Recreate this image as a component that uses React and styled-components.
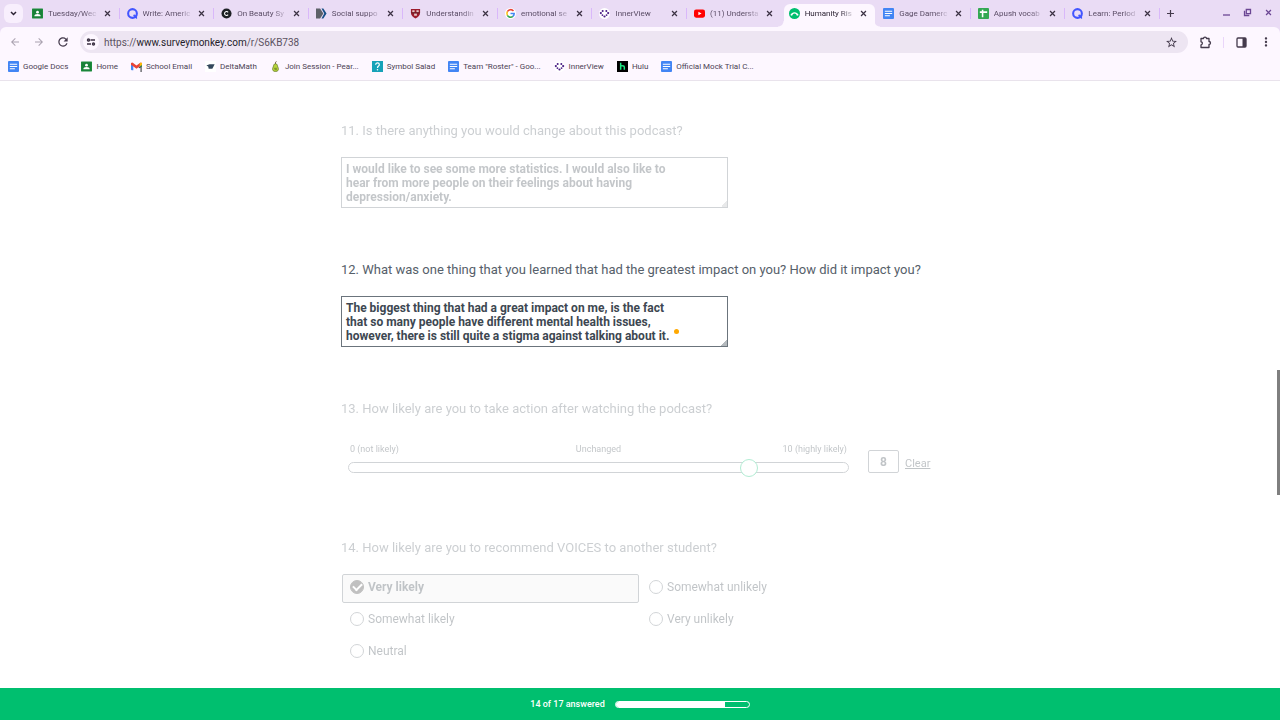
import React, { useState } from 'react';
import styled, { createGlobalStyle } from 'styled-components';
import { MdArrowBack, MdArrowForward, MdRefresh, MdStarBorder, MdMoreVert } from 'react-icons/md';

const GlobalStyle = createGlobalStyle`
  * {
    box-sizing: border-box;
  }

  body {
    margin: 0;
    background-color: #fff;
    font-family: Roboto, "Liberation Sans", sans-serif;
  }

  button, input, textarea {
    font-family: inherit;
  }
`;

/* ---------- favicons ---------- */

const ClassroomIcon = () => (
  <Favicon viewBox="0 0 24 24">
    <rect y="1" width="24" height="22" rx="1" fill="#1e8e3e" />
    <rect x="2" y="3" width="20" height="18" fill="#188038" />
    <circle cx="12" cy="9" r="3" fill="#fff" />
    <path d="M5 18c0-3.500 3-5 7-5s7 1.500 7 5z" fill="#fff" />
  </Favicon>
);

const DocsIcon = () => (
  <Favicon viewBox="0 0 24 24">
    <rect width="24" height="24" rx="2" fill="#4285f4" />
    <path d="M4 7h16M4 12h16M4 17h11" stroke="#fff" strokeWidth="2.4" />
  </Favicon>
);

const SheetsIcon = () => (
  <Favicon viewBox="0 0 24 24">
    <rect width="24" height="24" rx="2" fill="#34a853" />
    <path d="M10 4v16M4 9h16" stroke="#fff" strokeWidth="3.4" />
  </Favicon>
);

const QuillIcon = () => (
  <Favicon viewBox="0 0 24 24">
    <circle cx="12" cy="12" r="9.5" fill="none" stroke="#4255ff" strokeWidth="4.5" />
    <path d="M13 15l4 6 5 3v-5l-5-5z" fill="#4255ff" />
  </Favicon>
);

const CIcon = () => (
  <Favicon viewBox="0 0 24 24">
    <circle cx="12" cy="12" r="11" fill="#1d2025" />
    <path d="M15.5 9.500a4.300 4.300 0 1 0 0 5" fill="none" stroke="#fff" strokeWidth="2.2" />
  </Favicon>
);

const TagIcon = () => (
  <Favicon viewBox="0 0 24 24">
    <path d="M0 1h9l7 11-7 11H0z" fill="#5d6168" />
    <path d="M12 1h4l7 11-7 11h-4l6-11z" fill="#174f86" />
  </Favicon>
);

const ShieldIcon = () => (
  <Favicon viewBox="0 0 24 24">
    <path d="M2 2h20v8c0 7-5 11-10 13C7 21 2 17 2 10z" fill="#9c1c2c" />
    <path d="M5 5h5v4H5zM14 5h5v4h-5zM9 12h6v5H9z" fill="#e3c9c9" />
    <path d="M3 10.500h18" stroke="#42191c" strokeWidth="1.5" />
  </Favicon>
);

const GoogleIcon = () => (
  <Favicon viewBox="0 0 24 24">
    <circle cx="12" cy="12" r="12" fill="#fff" />
    <path d="M18.500 6.500A8 8 0 0 0 5.200 8" fill="none" stroke="#ea4335" strokeWidth="3.4" />
    <path d="M5.200 8a8 8 0 0 0 0 8" fill="none" stroke="#fbbc05" strokeWidth="3.4" />
    <path d="M5.200 16a8 8 0 0 0 12 2.200" fill="none" stroke="#34a853" strokeWidth="3.4" />
    <path d="M12 12h8a8 8 0 0 1-2.800 6.200" fill="none" stroke="#4285f4" strokeWidth="3.4" />
  </Favicon>
);

const InnerViewIcon = () => (
  <Favicon viewBox="0 0 24 24">
    <circle cx="12" cy="12" r="12" fill="#fff" />
    <g fill="#4a1d85">
      <circle cx="8" cy="6.500" r="2.2" />
      <circle cx="16" cy="6.500" r="2.2" />
      <circle cx="4" cy="11" r="2.4" />
      <circle cx="20" cy="11" r="2.4" />
      <circle cx="7.500" cy="15.500" r="2" />
      <circle cx="16.500" cy="15.500" r="2" />
      <circle cx="12" cy="18.500" r="2.4" />
    </g>
  </Favicon>
);

const YoutubeIcon = () => (
  <Favicon viewBox="0 0 24 24">
    <rect y="3" width="24" height="18" rx="4.5" fill="#f00" />
    <path d="M9.500 8v8l7-4z" fill="#fff" />
  </Favicon>
);

const SurveyIcon = () => (
  <Favicon viewBox="0 0 24 24">
    <circle cx="12" cy="12" r="12" fill="#00bf6f" />
    <path d="M5.500 15.500a6.700 6.700 0 0 1 13 0" fill="none" stroke="#fff" strokeWidth="2.8" />
    <circle cx="5.500" cy="14.500" r="2" fill="#fff" />
    <circle cx="18.500" cy="14.500" r="2" fill="#fff" />
  </Favicon>
);

const GmailIcon = () => (
  <Favicon viewBox="0 0 24 24">
    <path d="M0 5h5v15H2a2 2 0 0 1-2-2z" fill="#4285f4" />
    <path d="M19 5h5v8h-5z" fill="#34a853" />
    <path d="M0 4.500l3-1.500 9 7 9-7 3 1.500V8l-12 9L0 8z" fill="#ea4335" />
    <path d="M19 5l3-2 2 2v3l-5 4z" fill="#fbbc05" />
    <path d="M17 15l3-2h2v11" fill="none" stroke="#3c4043" strokeWidth="2.4" />
  </Favicon>
);

const DeltaIcon = () => (
  <Favicon viewBox="0 0 24 24">
    <rect width="24" height="24" fill="#fff" />
    <path d="M3 10l7-3h11l-3 6-2 4H8l-1-5z" fill="#33475b" />
  </Favicon>
);

const PearIcon = () => (
  <Favicon viewBox="0 0 24 24">
    <path d="M12 6c4 0 4 4 5 7 3 5 1 10-5 10S4 18 7 13c1-3 1-7 5-7z" fill="#b6d53c" stroke="#5c7020" strokeWidth="1.5" />
    <path d="M12 6c0-3 0-4 2-5" stroke="#5c4a20" strokeWidth="2" fill="none" />
    <path d="M9 16h6M10 19h5" stroke="#596b22" strokeWidth="1.5" />
  </Favicon>
);

const SymbolIcon = () => (
  <Favicon viewBox="0 0 24 24">
    <rect width="24" height="24" fill="#17a2b8" />
    <path d="M8 8c0-5 8-5 8 0 0 3-4 3-4 7" fill="none" stroke="#fff" strokeWidth="2.6" />
    <circle cx="12" cy="19" r="1.7" fill="#fff" />
  </Favicon>
);

const HuluIcon = () => (
  <Favicon viewBox="0 0 24 24">
    <rect width="24" height="24" fill="#000" />
    <path d="M8 4v15M8 12c0-2 8-3 8 1v6" fill="none" stroke="#1ce783" strokeWidth="3.2" />
  </Favicon>
);

/* ---------- interface icons ---------- */

const CrossIcon = () => (
  <svg width="7" height="7" viewBox="0 0 10 10" fill="none" stroke="currentColor" strokeWidth="1.8">
    <path d="M1.500 1.500l7 7M8.500 1.500l-7 7" />
  </svg>
);

const ChevronIcon = () => (
  <svg width="7" height="5" viewBox="0 0 7 5" fill="none" stroke="currentColor" strokeWidth="1.5">
    <path d="M1 1l2.500 2.500L6 1" />
  </svg>
);

const PlusIcon = () => (
  <svg width="9" height="9" viewBox="0 0 9 9" fill="none" stroke="currentColor" strokeWidth="1.2">
    <path d="M4.500 1v7M1 4.500h7" />
  </svg>
);

const MinimizeIcon = () => (
  <svg width="9" height="9" viewBox="0 0 9 9">
    <path d="M1 7h7" stroke="currentColor" strokeWidth="1.3" />
  </svg>
);

const RestoreIcon = () => (
  <svg width="9" height="9" viewBox="0 0 9 9" fill="none" stroke="currentColor" strokeWidth="1.3">
    <path d="M3.300 1.500h4.200v4.200H3.300zM1.500 2.800v4.700h4.800" />
  </svg>
);

const TuneIcon = () => (
  <svg width="10" height="8" viewBox="0 0 10 8" fill="none" stroke="currentColor" strokeWidth="1.4">
    <path d="M4.500 2H9M1 6h4" />
    <circle cx="2.500" cy="2" r="1" />
    <circle cx="7.500" cy="6" r="1" />
  </svg>
);

const PuzzleIcon = () => (
  <svg width="13" height="13" viewBox="0 0 13 13" fill="none" stroke="currentColor" strokeWidth="1.3">
    <path d="M2 2.500h2.500c0-1.800 3-1.800 3 0H10v3c2 0 2 3 0 3V11.500H2V8.800c1.800 0 1.800-3 0-3z" strokeLinejoin="round" />
  </svg>
);

const SidePanelIcon = () => (
  <svg width="11" height="11" viewBox="0 0 11 11">
    <rect x="1" y="1" width="9" height="9" rx="1" fill="none" stroke="currentColor" strokeWidth="1.3" />
    <path d="M6.500 1H10v9H6.500z" fill="currentColor" />
  </svg>
);

const tabs = [
  { title: 'Tuesday/Wec', icon: ClassroomIcon },
  { title: 'Write: Americ', icon: QuillIcon },
  { title: 'On Beauty Sy', icon: CIcon },
  { title: 'Social suppo', icon: TagIcon },
  { title: 'Understandin', icon: ShieldIcon },
  { title: 'emotional se', icon: GoogleIcon },
  { title: 'InnerView', icon: InnerViewIcon },
  { title: '(11) Understa', icon: YoutubeIcon },
  { title: 'Humanity Ris', icon: SurveyIcon, active: true },
  { title: 'Gage Damerc', icon: DocsIcon },
  { title: 'Apush vocab', icon: SheetsIcon },
  { title: 'Learn: Period', icon: QuillIcon },
];

const bookmarks = [
  { title: 'Google Docs', icon: DocsIcon },
  { title: 'Home', icon: ClassroomIcon },
  { title: 'School Email', icon: GmailIcon },
  { title: 'DeltaMath', icon: DeltaIcon },
  { title: 'Join Session - Pear...', icon: PearIcon },
  { title: 'Symbol Salad', icon: SymbolIcon },
  { title: 'Team "Roster" - Goo...', icon: DocsIcon },
  { title: 'InnerView', icon: InnerViewIcon },
  { title: 'Hulu', icon: HuluIcon },
  { title: 'Official Mock Trial C...', icon: DocsIcon },
];

const options = ['Very likely', 'Somewhat likely', 'Neutral', 'Somewhat unlikely', 'Very unlikely'];

const BrowserHeader = () => (
  <Header>
    <TabStrip>
      <TabSearch aria-label="Search tabs"><ChevronIcon /></TabSearch>
      <TabList>
        {tabs.map(({ title, icon: Icon, active }, index) => (
          <Tab key={title} $active={active} $noLine={active || tabs[index + 1]?.active}>
            {active && <TabFlare $side="left" />}
            <Icon />
            <TabTitle $active={active}>{title}</TabTitle>
            <TabClose aria-label={`Close ${title}`}><CrossIcon /></TabClose>
            {active && <TabFlare $side="right" />}
          </Tab>
        ))}
      </TabList>
      <StripEnd>
        <IconButton aria-label="New tab"><PlusIcon /></IconButton>
        <WindowControls>
          <IconButton $purple aria-label="Minimize"><MinimizeIcon /></IconButton>
          <IconButton $purple aria-label="Restore"><RestoreIcon /></IconButton>
          <IconButton $purple aria-label="Close window"><CrossIcon /></IconButton>
        </WindowControls>
      </StripEnd>
    </TabStrip>
    <Toolbar>
      <NavButtons>
        <IconButton $muted aria-label="Back"><MdArrowBack size={12} /></IconButton>
        <IconButton $muted aria-label="Forward"><MdArrowForward size={12} /></IconButton>
        <IconButton aria-label="Reload"><MdRefresh size={14} /></IconButton>
      </NavButtons>
      <AddressBar>
        <SiteInfo aria-label="Site information"><TuneIcon /></SiteInfo>
        <Address>https://<strong>www.surveymonkey.com</strong>/r/S6KB738</Address>
        <IconButton aria-label="Bookmark this page"><MdStarBorder size={13} /></IconButton>
      </AddressBar>
      <ToolbarActions>
        <IconButton aria-label="Extensions"><PuzzleIcon /></IconButton>
        <Divider />
        <IconButton aria-label="Side panel"><SidePanelIcon /></IconButton>
        <MenuButton aria-label="Menu"><MdMoreVert size={14} /></MenuButton>
      </ToolbarActions>
    </Toolbar>
    <BookmarksBar>
      {bookmarks.map(({ title, icon: Icon }) => (
        <Bookmark key={title} href="#">
          <Icon />
          {title}
        </Bookmark>
      ))}
    </BookmarksBar>
  </Header>
);

const App = () => {
  const [change, setChange] = useState('I would like to see some more statistics. I would also like to hear from more people on their feelings about having depression/anxiety.');
  const [learned, setLearned] = useState('The biggest thing that had a great impact on me, is the fact that so many people have different mental health issues, however, there is still quite a stigma against talking about it.');
  const [likely, setLikely] = useState(8);
  const [recommend, setRecommend] = useState('Very likely');
  const answered = 14;
  const total = 17;

  return (
    <Page>
      <GlobalStyle />
      <BrowserHeader />
      <Survey>
        <Question $dimmed>
          <QuestionTitle as="label" htmlFor="q11">11. Is there anything you would change about this podcast?</QuestionTitle>
          <AnswerBox>
            <Answer id="q11" value={change} onChange={(e) => setChange(e.target.value)} />
          </AnswerBox>
        </Question>

        <Question>
          <QuestionTitle as="label" htmlFor="q12">12. What was one thing that you learned that had the greatest impact on you? How did it impact you?</QuestionTitle>
          <AnswerBox>
            <Answer id="q12" value={learned} onChange={(e) => setLearned(e.target.value)} />
            <CheckerDot />
          </AnswerBox>
        </Question>

        <Question $dimmed>
          <QuestionTitle as="label" htmlFor="q13">13. How likely are you to take action after watching the podcast?</QuestionTitle>
          <SliderRow>
            <SliderColumn>
              <SliderLabels>
                <SliderLabel $align="left">0 (not likely)</SliderLabel>
                <SliderLabel $align="center">Unchanged</SliderLabel>
                <SliderLabel $align="right">10 (highly likely)</SliderLabel>
              </SliderLabels>
              <Track>
                <Slider id="q13" type="range" min="0" max="10" value={likely} onChange={(e) => setLikely(e.target.value)} />
              </Track>
            </SliderColumn>
            <SliderValue aria-label="Slider value" value={likely} onChange={(e) => setLikely(e.target.value)} />
            <ClearLink href="#q13">Clear</ClearLink>
          </SliderRow>
        </Question>

        <Question as="fieldset" $dimmed>
          <QuestionTitle as="legend">14. How likely are you to recommend VOICES to another student?</QuestionTitle>
          <Options>
            {options.map((option) => (
              <Option key={option} $checked={recommend === option}>
                <Radio type="radio" name="q14" checked={recommend === option} onChange={() => setRecommend(option)} />
                {option}
              </Option>
            ))}
          </Options>
        </Question>
      </Survey>
      <Footer>
        <span>{answered} of {total} answered</span>
        <Progress role="progressbar" aria-label="Survey progress" aria-valuenow={answered} aria-valuemax={total}>
          <ProgressFill style={{ width: `${(answered / total) * 100}%` }} />
        </Progress>
      </Footer>
      <ScrollThumb />
    </Page>
  );
};

const Page = styled.div`
  display: flex;
  flex-direction: column;
  min-height: 100vh;
`;

const Favicon = styled.svg`
  width: 11px;
  height: 11px;
  flex-shrink: 0;
`;

const Header = styled.header`
  background-color: #eadcf5;
  border-bottom: 1px solid #e9e3ec;
`;

const TabStrip = styled.div`
  display: flex;
  height: 27px;
  padding-left: 4px;
`;

const TabSearch = styled.button`
  display: flex;
  align-items: center;
  justify-content: center;
  width: 19px;
  height: 19px;
  margin: 4px 2px 0 0;
  padding: 0;
  border: 0;
  border-radius: 6px;
  background-color: #f8effd;
  color: #2b2233;
`;

const TabList = styled.div`
  display: flex;
  flex: 1;
  min-width: 0;
`;

const Tab = styled.div`
  position: relative;
  display: flex;
  align-items: center;
  flex: 1;
  min-width: 0;
  padding: 0 8px 0 7px;
  z-index: 0;

  &::before {
    content: "";
    position: absolute;
    z-index: -1;
    inset: 4px 1px 0 2px;
    border-radius: 6px 6px 0 0;
    background-color: ${(props) => (props.$active ? '#fdf7ff' : 'transparent')};
  }

  &::after {
    content: "";
    position: absolute;
    right: 0;
    top: 8px;
    width: 1px;
    height: 11px;
    background-color: ${(props) => (props.$noLine ? 'transparent' : '#d9b8fa')};
  }
`;

/* concave corner where the active tab meets the toolbar */
const TabFlare = styled.span`
  position: absolute;
  bottom: 0;
  ${(props) => props.$side}: -4px;
  width: 6px;
  height: 6px;
  background: radial-gradient(circle at ${(props) => (props.$side === 'left' ? '0 0' : '100% 0')}, transparent 5px, #fdf7ff 6px);
`;

const TabTitle = styled.span`
  flex: 1;
  min-width: 0;
  margin: 0 4px 0 5px;
  overflow: hidden;
  white-space: nowrap;
  font-size: 8px;
  line-height: 12px;
  color: ${(props) => (props.$active ? '#2b2233' : '#5b4d66')};
  mask-image: linear-gradient(to right, #000 70%, transparent);
`;

const TabClose = styled.button`
  display: flex;
  align-items: center;
  justify-content: center;
  width: 9px;
  height: 9px;
  padding: 0;
  border: 0;
  background: none;
  color: #3c3244;
`;

const IconButton = styled.button`
  display: flex;
  align-items: center;
  justify-content: center;
  width: 21px;
  height: 20px;
  padding: 0;
  border: 0;
  background: none;
  color: ${(props) => (props.$muted ? '#aaa2b0' : props.$purple ? '#6b4694' : '#443a4c')};
`;

const MenuButton = styled(IconButton)`
  margin-left: 3px;
`;

const StripEnd = styled.div`
  display: flex;
  align-items: center;
  justify-content: space-between;
  width: 120px;
`;

const WindowControls = styled.div`
  display: flex;
  padding: 0 1px 3px 0;
`;

const Toolbar = styled.div`
  display: flex;
  align-items: center;
  height: 30px;
  border-radius: 6px 6px 0 0;
  background-color: #fdf7ff;
`;

const NavButtons = styled.div`
  display: flex;
  gap: 3px;
  padding: 0 7px 0 4px;
`;

const AddressBar = styled.div`
  display: flex;
  align-items: center;
  flex: 1;
  height: 22px;
  padding: 0 6px 0 3px;
  border-radius: 11px;
  background-color: #ede5f2;
`;

const SiteInfo = styled.button`
  display: flex;
  align-items: center;
  justify-content: center;
  width: 16px;
  height: 16px;
  padding: 0;
  border: 0;
  border-radius: 50%;
  background-color: #fdf7ff;
  color: #3c3244;
`;

const Address = styled.span`
  flex: 1;
  margin-left: 5px;
  font-size: 10px;
  color: #5b5261;

  strong {
    font-weight: 400;
    color: #241c2a;
  }
`;

const ToolbarActions = styled.div`
  display: flex;
  align-items: center;
  padding: 0 4px 0 7px;
`;

const Divider = styled.div`
  width: 1px;
  height: 11px;
  margin: 0 7px;
  background-color: #ead6fa;
`;

const BookmarksBar = styled.nav`
  display: flex;
  align-items: center;
  gap: 13px;
  height: 23px;
  padding: 0 8px 4px;
  background-color: #fdf7ff;
`;

const Bookmark = styled.a`
  display: flex;
  align-items: center;
  gap: 4px;
  font-size: 8px;
  white-space: nowrap;
  text-decoration: none;
  color: #4c4254;
`;

const Survey = styled.main`
  flex: 1;
  width: 100%;
  max-width: 598px;
  margin: 0 auto;
  padding-top: 41px;
  color: #333e48;
`;

const Question = styled.section`
  min-width: 0;
  min-height: 139px;
  margin: 0;
  padding: 0;
  border: 0;
  opacity: ${(props) => (props.$dimmed ? 0.3 : 1)};
`;

const QuestionTitle = styled.h2`
  display: block;
  margin: 0 0 17px;
  padding: 0;
  font-size: 13px;
  font-weight: 400;
  line-height: 18px;
  white-space: nowrap;
  color: #56606a;
`;

const AnswerBox = styled.div`
  position: relative;
  width: 387px;
`;

const Answer = styled.textarea`
  display: block;
  width: 100%;
  height: 51px;
  padding: 4px 44px 4px 4px;
  border: 1px solid #6b747c;
  border-radius: 0;
  outline: none;
  overflow: hidden;
  background-color: #fff;
  color: #3d4751;
  font-size: 12px;
  font-weight: 700;
  line-height: 14px;

  &::-webkit-resizer {
    background: linear-gradient(135deg, transparent 80%, #b4b9bd 80%);
  }
`;

const CheckerDot = styled.span`
  position: absolute;
  left: 333px;
  top: 33px;
  width: 5px;
  height: 5px;
  border-radius: 50%;
  background-color: #ffa800;
`;

const SliderRow = styled.div`
  display: flex;
  align-items: flex-end;
  padding: 8px 0 0 7px;
`;

const SliderColumn = styled.div`
  width: 501px;
  margin-right: 19px;
`;

const SliderLabels = styled.div`
  display: grid;
  grid-template-columns: repeat(3, 1fr);
  margin-bottom: 7px;
  padding: 0 2px;
  font-size: 9px;
  line-height: 12px;
`;

const SliderLabel = styled.span`
  text-align: ${(props) => props.$align};
`;

const Track = styled.div`
  display: flex;
  align-items: center;
  height: 11px;
  border: 1px solid #6b747c;
  border-radius: 6px;
`;

const Slider = styled.input`
  appearance: none;
  flex: 1;
  height: 18px;
  margin: 0 -10px;
  background: transparent;

  &::-webkit-slider-thumb {
    appearance: none;
    width: 18px;
    height: 18px;
    border: 1px solid #00bf6f;
    border-radius: 50%;
    background-color: #fff;
  }
`;

const SliderValue = styled.input`
  width: 31px;
  height: 23px;
  padding: 0;
  border: 1px solid #6b747c;
  border-radius: 2px;
  background-color: #fff;
  color: #333e48;
  font-size: 12px;
  font-weight: 700;
  text-align: center;
`;

const ClearLink = styled.a`
  margin-left: 6px;
  font-size: 11px;
  line-height: 18px;
  color: #333e48;
`;

const Options = styled.div`
  display: grid;
  grid-template-rows: repeat(3, 29px);
  grid-auto-flow: column;
  grid-auto-columns: 1fr;
  gap: 3px 2px;
  padding: 0 1px;
`;

const Option = styled.label`
  display: flex;
  align-items: center;
  gap: 4px;
  padding: 0 7px 3px;
  border: 1px solid ${(props) => (props.$checked ? '#6b747c' : 'transparent')};
  border-radius: 2px;
  background-color: ${(props) => (props.$checked ? '#f0f0f0' : 'transparent')};
  font-size: 12px;
  font-weight: ${(props) => (props.$checked ? 700 : 400)};
`;

const Radio = styled.input`
  appearance: none;
  display: grid;
  place-items: center;
  width: 14px;
  height: 14px;
  margin: 0;
  border: 1px solid #6b747c;
  border-radius: 50%;
  background-color: #fff;

  &:checked {
    border-color: #333;
    background-color: #333;
  }

  &:checked::before {
    content: "";
    width: 7px;
    height: 4px;
    border-left: 2px solid #fff;
    border-bottom: 2px solid #fff;
    transform: translateY(-1px) rotate(-45deg);
  }
`;

const Footer = styled.footer`
  display: flex;
  align-items: center;
  justify-content: center;
  gap: 10px;
  height: 32px;
  background-color: #00bf6f;
  color: #fff;
  font-size: 9px;
  font-weight: 500;
`;

const Progress = styled.div`
  width: 135px;
  height: 7px;
  border: 1px solid #fff;
  border-radius: 4px;
  overflow: hidden;
`;

const ProgressFill = styled.div`
  height: 100%;
  background-color: #fff;
`;

const ScrollThumb = styled.div`
  position: absolute;
  right: 0;
  top: 370px;
  width: 3px;
  height: 125px;
  background-color: #7f7f7f;
`;

export default App;
